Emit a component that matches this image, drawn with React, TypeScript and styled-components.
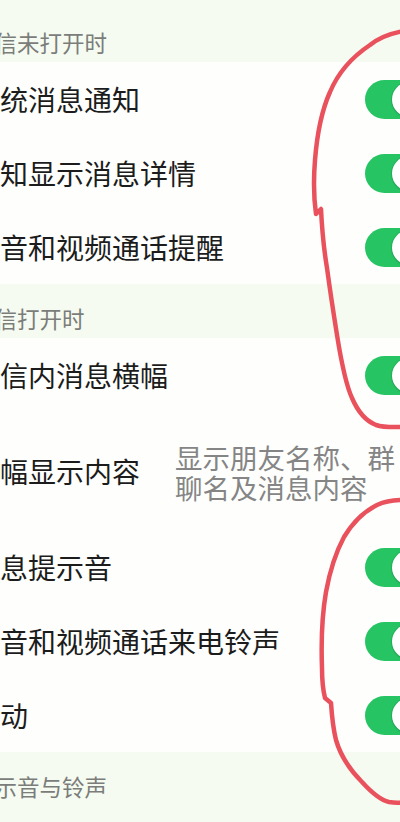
import { createGlobalStyle, styled } from 'styled-components';

const GlobalStyle = createGlobalStyle`
  html, body {
    margin: 0;
    padding: 0;
    width: 400px;
    height: 822px;
    overflow: hidden;
    background: #f5fbf0;
    font-family: 'Noto Sans CJK SC', 'Noto Sans', sans-serif;
  }
`;

type Item = { label: string; note?: string; on?: boolean };
type Group = { title: string; items: Item[] };

const groups: Group[] = [
  {
    title: '微信未打开时',
    items: [
      { label: '系统消息通知', on: true },
      { label: '通知显示消息详情', on: true },
      { label: '语音和视频通话提醒', on: true },
    ],
  },
  {
    title: '微信打开时',
    items: [
      { label: '微信内消息横幅', on: true },
      { label: '横幅显示内容', note: '显示朋友名称、群聊名及消息内容' },
      { label: '消息提示音', on: true },
      { label: '语音和视频通话来电铃声', on: true },
      { label: '振动', on: true },
    ],
  },
  { title: '提示音与铃声', items: [] },
];

const App = () => {
  return (
    <Page>
      <GlobalStyle />
      {groups.map((group, gi) => (
        <section key={group.title}>
          <SectionTitle $first={gi === 0}>{group.title}</SectionTitle>
          <List>
            {group.items.map((item) => (
              <Row key={item.label} $tall={!!item.note}>
                <Label>{item.label}</Label>
                {item.note ? (
                  <Note>{item.note}</Note>
                ) : (
                  <Switch $on={!!item.on}>
                    <Knob />
                  </Switch>
                )}
              </Row>
            ))}
          </List>
        </section>
      ))}
      {/* hand-drawn red marks over the screenshot */}
      <Marks viewBox="0 0 400 822" width="400" height="822">
        <path d="M404 31 C392 33 380 37 370 45 C352 57 338 73 330 92 C321 112 317 135 315 160 C313 185 314 200 316 214 L321 209 C322 230 324 250 327 268 C330 290 333 310 337 335 C341 360 346 385 352 398 C358 412 366 421 376 425 C385 428 395 427 404 427" />
        <path d="M404 500 C395 500 386 501 377 505 C365 511 353 522 344 537 C336 552 330 570 326 592 C322 615 321 640 322 668 C322 680 323 690 325 698 L331 703 C332 718 333 728 336 740 C341 757 350 770 362 782 C372 793 380 800 389 802 C395 803 400 803 404 802" />
      </Marks>
    </Page>
  );
};

export default App;

const Page = styled.div`
  position: relative;
  width: 400px;
  height: 822px;
  overflow: hidden;
`;

const SectionTitle = styled.div<{ $first: boolean }>`
  height: ${(p) => (p.$first ? '62px' : '54px')};
  box-sizing: border-box;
  padding-top: ${(p) => (p.$first ? '29px' : '21px')};
  margin-left: -28px;
  font-size: 22.5px;
  line-height: 26px;
  color: #7b7d7a;
  background: #f5fbf0;
  white-space: nowrap;
`;

const List = styled.div`
  display: flex;
  flex-direction: column;
  background: #fefffd;
`;

const Row = styled.div<{ $tall: boolean }>`
  display: flex;
  align-items: center;
  justify-content: space-between;
  height: ${(p) => (p.$tall ? '118px' : '74px')};
`;

const Label = styled.span`
  margin-left: -28px;
  font-size: 28px;
  line-height: 34px;
  color: #1c1c1c;
  white-space: nowrap;
`;

const Note = styled.span`
  flex: 0 0 226px;
  margin-right: -1px;
  font-size: 27.5px;
  line-height: 30px;
  color: #858585;
  padding-top: 2px;
`;

const Switch = styled.div<{ $on: boolean }>`
  display: flex;
  align-items: center;
  justify-content: ${(p) => (p.$on ? 'flex-end' : 'flex-start')};
  flex: 0 0 64px;
  height: 39px;
  margin-right: -29px;
  padding: 0 2px;
  box-sizing: border-box;
  border-radius: 20px;
  background: ${(p) => (p.$on ? '#27c464' : '#e5e5e5')};
`;

const Knob = styled.div`
  width: 35px;
  height: 35px;
  border-radius: 50%;
  background: #ffffff;
  box-shadow: 0 0 0 1px rgba(0, 0, 0, 0.08), 0 1px 2px rgba(0, 0, 0, 0.15);
`;

const Marks = styled.svg`
  position: absolute;
  top: 0;
  left: 0;
  pointer-events: none;

  path {
    fill: none;
    stroke: #e9525d;
    stroke-width: 4.5;
    stroke-linecap: round;
    stroke-linejoin: round;
  }
`;
